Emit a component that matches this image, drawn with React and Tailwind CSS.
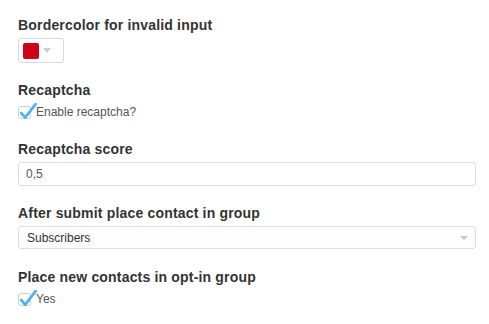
import React from "react";

function Check({ label }) {
  return (
    <div className="mt-[2px] flex h-[20px] items-center">
      <span className="relative inline-block h-[13px] w-[13px] rounded-[3px] border border-[#cfcfcf] bg-white">
        <svg
          className="absolute left-[0px] top-[-4px]"
          width="18"
          height="17"
          viewBox="0 0 18 17"
        >
          <path
            d="M2.2 10 L6.2 14.6 L16.6 1.2"
            fill="none"
            stroke="#4eb5f4"
            strokeWidth="2.8"
            strokeLinecap="round"
            strokeLinejoin="round"
          />
        </svg>
      </span>
      <span className="ml-[5px] text-[12px] leading-[20px] text-[#555]">{label}</span>
    </div>
  );
}

function Label({ children }) {
  return (
    <div className="text-[14px] font-bold leading-[20px] tracking-[0.18px] text-[#333]">
      {children}
    </div>
  );
}

export default function App() {
  return (
    <div className="min-h-[324px] w-[489px] bg-white pl-[18px] pr-[13px] pt-[15px] font-['Liberation_Sans',Arial,sans-serif]">
      <Label>Bordercolor for invalid input</Label>
      <div className="mt-[3px] flex h-[25px] w-[46px] items-center rounded-[3px] border border-[#d9d9d9] bg-white pl-[4px]">
        <span className="block h-[16px] w-[16px] rounded-[2px] bg-[#d0021b]" />
        <svg className="ml-[4px]" width="8" height="5" viewBox="0 0 8 5">
          <path d="M0 0 L8 0 L4 5 Z" fill="#cccccc" />
        </svg>
      </div>

      <div className="mt-[17px]">
        <Label>Recaptcha</Label>
        <Check label="Enable recaptcha?" />
      </div>

      <div className="mt-[17px]">
        <Label>Recaptcha score</Label>
        <div className="mt-[3px] flex h-[24px] items-center rounded-[3px] border border-[#dcdcdc] bg-white pl-[7px] text-[12px] text-[#555]">
          0,5
        </div>
      </div>

      <div className="mt-[17px]">
        <Label>After submit place contact in group</Label>
        <div className="mt-[3px] flex h-[23px] items-center justify-between rounded-[3px] border border-[#dcdcdc] bg-[#fdfdfd] pl-[8px] pr-[7px] text-[12px] text-[#333]">
          <span>Subscribers</span>
          <svg width="8" height="4" viewBox="0 0 8 4">
            <path d="M0 0 L8 0 L4 4 Z" fill="#c4c4c4" />
          </svg>
        </div>
      </div>

      <div className="mt-[18px]">
        <Label>Place new contacts in opt-in group</Label>
        <Check label="Yes" />
      </div>
    </div>
  );
}
